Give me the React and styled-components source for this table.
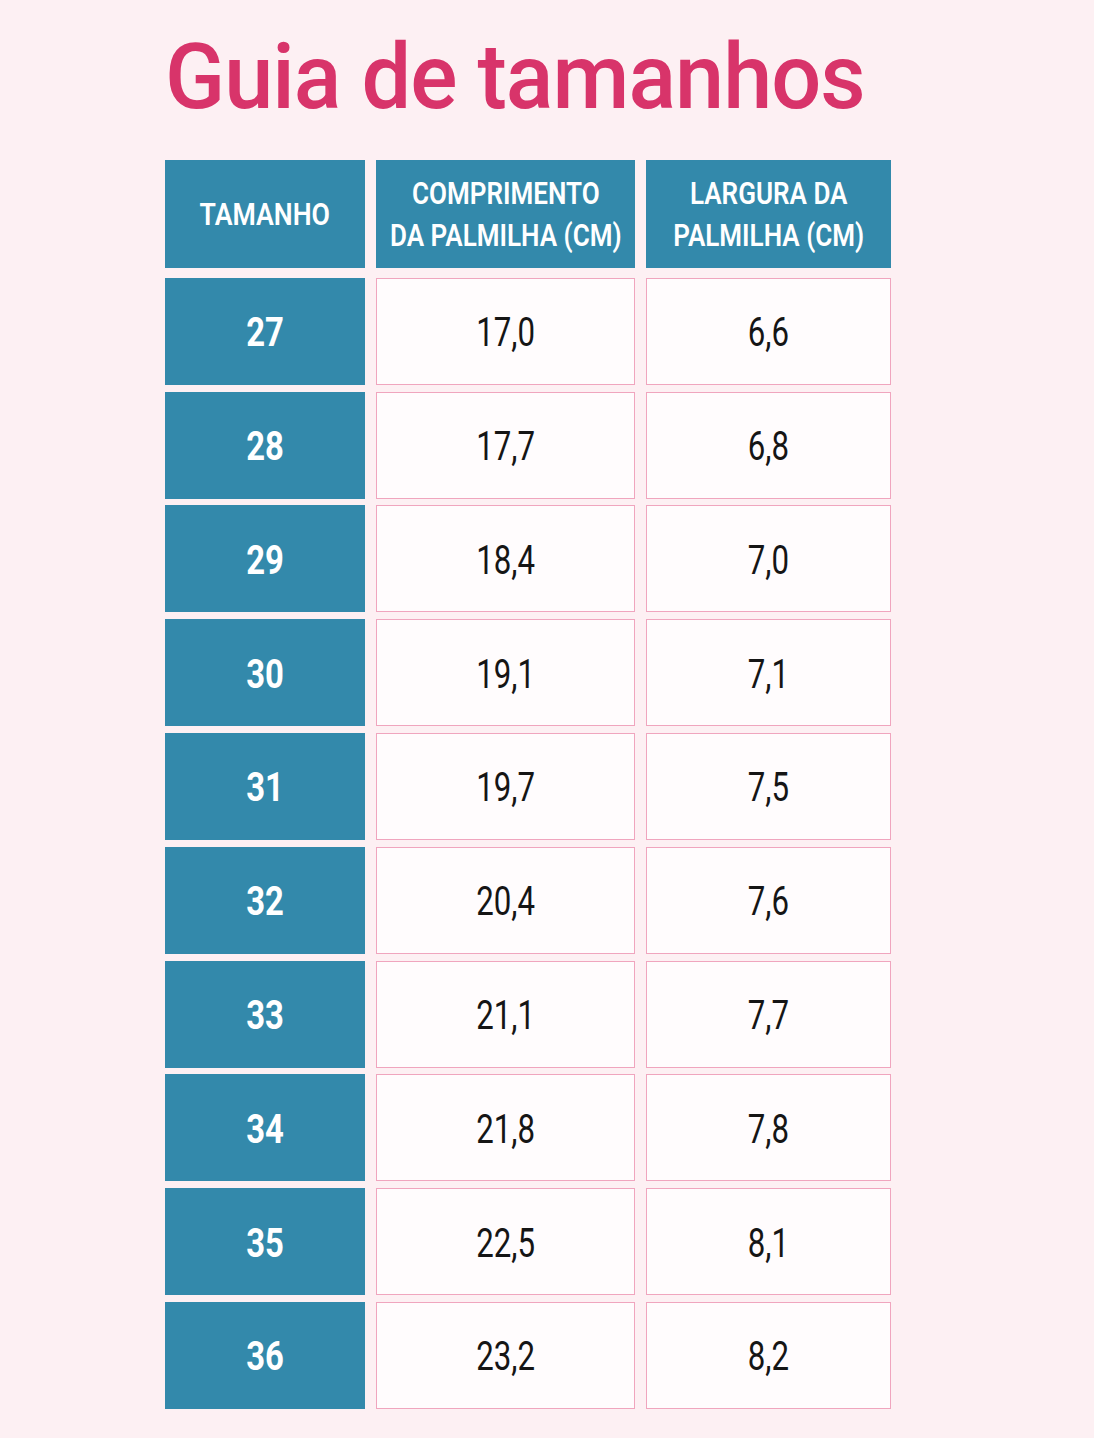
import React from "react";
import styled, { createGlobalStyle } from "styled-components";

const Global = createGlobalStyle`
  html, body { margin: 0; padding: 0; background: #fdf0f3; }
  body { font-family: Roboto, "Liberation Sans", sans-serif; }
`;

const Page = styled.div`
  width: 1094px;
  min-height: 1438px;
  background: #fdf0f3;
  padding: 25px 0 0 165px;
  box-sizing: border-box;
`;

const Title = styled.h1`
  margin: 0 0 31px 0;
  font-family: Roboto, sans-serif;
  font-weight: 500;
  font-size: 91px;
  line-height: 104px;
  color: #d8346a;
  letter-spacing: -1px;
`;

const Squeeze = styled.span`
  display: inline-block;
  transform: scaleX(${(p) => p.$s});
  transform-origin: ${(p) => p.$origin || "center"};
  white-space: nowrap;
`;

const Grid = styled.div`
  display: grid;
  grid-template-columns: 200px 259px 245px;
  column-gap: 11px;
  row-gap: 6.8px;
  grid-template-rows: 111px;
  grid-auto-rows: 107px;
  width: 726px;
`;

const HeadCell = styled.div`
  background: #3389ab;
  color: #ffffff;
  display: flex;
  align-items: center;
  justify-content: center;
  text-align: center;
  font-weight: 600;
  font-size: 31px;
  line-height: 42px;
  margin-bottom: 3px;
  padding-top: 2px;
  box-sizing: border-box;
`;

const SizeCell = styled.div`
  background: #3389ab;
  color: #ffffff;
  display: flex;
  align-items: center;
  justify-content: center;
  font-weight: 700;
  font-size: 40px;
  padding-top: 3px;
  box-sizing: border-box;
`;

const ValueCell = styled.div`
  background: #fffcfd;
  border: 1.5px solid #f0a5be;
  box-sizing: border-box;
  color: #151515;
  display: flex;
  align-items: center;
  justify-content: center;
  font-weight: 400;
  font-size: 40px;
  padding-top: 3px;
`;

const rows = [
  ["27", "17,0", "6,6"],
  ["28", "17,7", "6,8"],
  ["29", "18,4", "7,0"],
  ["30", "19,1", "7,1"],
  ["31", "19,7", "7,5"],
  ["32", "20,4", "7,6"],
  ["33", "21,1", "7,7"],
  ["34", "21,8", "7,8"],
  ["35", "22,5", "8,1"],
  ["36", "23,2", "8,2"],
];

export default function App() {
  return (
    <Page>
      <Global />
      <Title>
        <Squeeze $s={0.97} $origin="left">Guia de tamanhos</Squeeze>
      </Title>
      <Grid>
        <HeadCell>
          <Squeeze $s={0.86}>TAMANHO</Squeeze>
        </HeadCell>
        <HeadCell>
          <Squeeze $s={0.84}>
            COMPRIMENTO
            <br />
            DA PALMILHA (CM)
          </Squeeze>
        </HeadCell>
        <HeadCell>
          <Squeeze $s={0.84}>
            LARGURA DA
            <br />
            PALMILHA (CM)
          </Squeeze>
        </HeadCell>
        {rows.map(([s, c, l]) => (
          <React.Fragment key={s}>
            <SizeCell>
              <Squeeze $s={0.82}>{s}</Squeeze>
            </SizeCell>
            <ValueCell>
              <Squeeze $s={0.78}>{c}</Squeeze>
            </ValueCell>
            <ValueCell>
              <Squeeze $s={0.78}>{l}</Squeeze>
            </ValueCell>
          </React.Fragment>
        ))}
      </Grid>
    </Page>
  );
}
